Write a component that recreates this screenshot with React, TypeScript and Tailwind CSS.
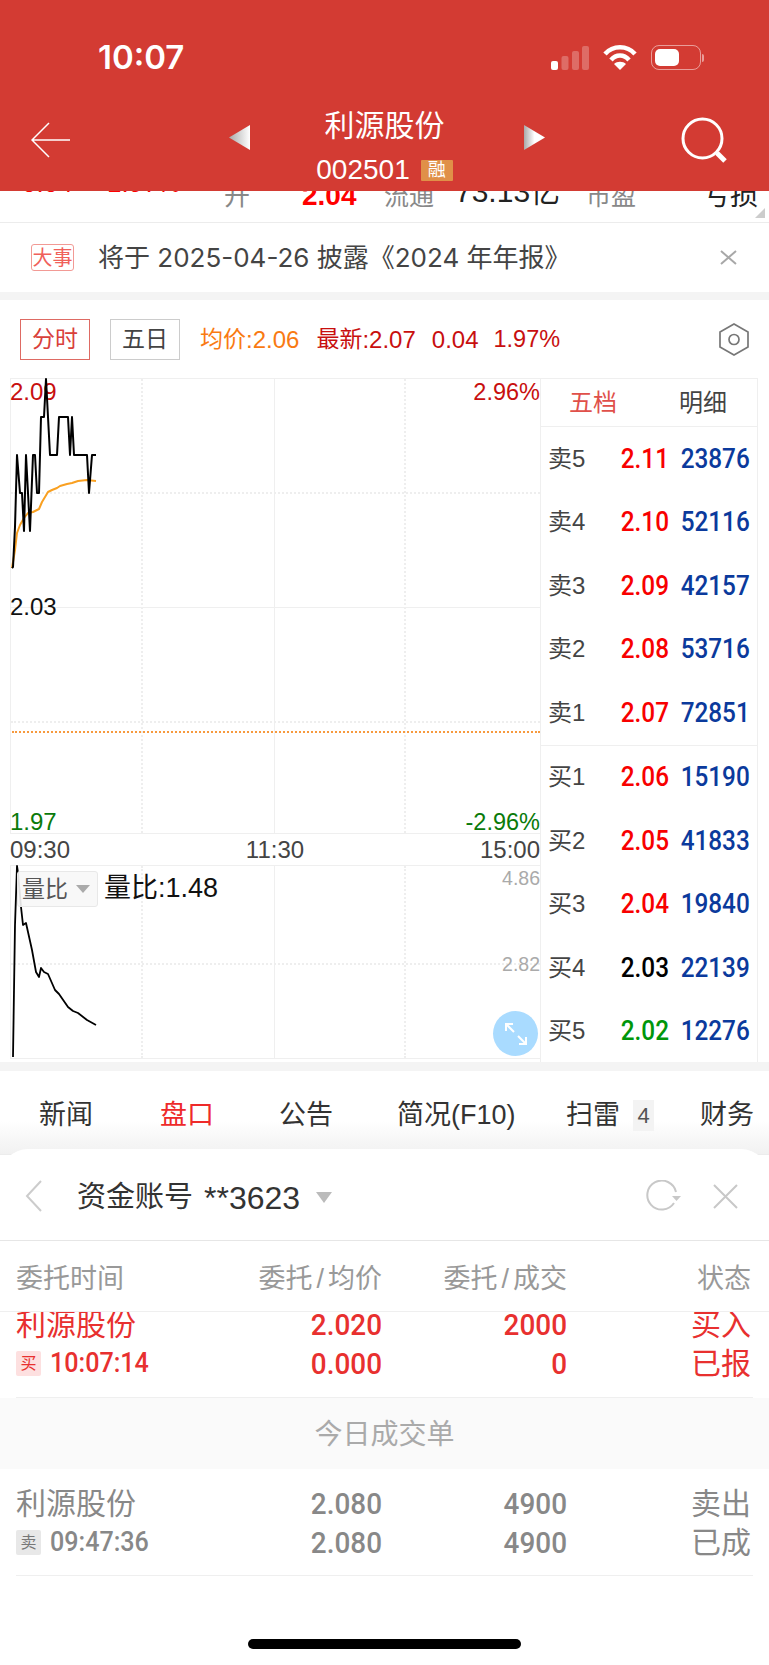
import React from 'react';

const cjk = '"Liberation Sans", "Noto Sans CJK SC", sans-serif';

const asks = [
  { label: '卖5', price: '2.11', vol: '23876', color: 'text-[#f80000]' },
  { label: '卖4', price: '2.10', vol: '52116', color: 'text-[#f80000]' },
  { label: '卖3', price: '2.09', vol: '42157', color: 'text-[#f80000]' },
  { label: '卖2', price: '2.08', vol: '53716', color: 'text-[#f80000]' },
  { label: '卖1', price: '2.07', vol: '72851', color: 'text-[#f80000]' },
];

const bids = [
  { label: '买1', price: '2.06', vol: '15190', color: 'text-[#f80000]' },
  { label: '买2', price: '2.05', vol: '41833', color: 'text-[#f80000]' },
  { label: '买3', price: '2.04', vol: '19840', color: 'text-[#f80000]' },
  { label: '买4', price: '2.03', vol: '22139', color: 'text-black' },
  { label: '买5', price: '2.02', vol: '12276', color: 'text-[#00960a]' },
];

const priceLine =
  '2,190 3,189 5,149 7,77 10,115 12,115 14,153 16,77 20,153 23,77 25,77 27,115 29,115 31,39 34,39 36,1 40,77 47,77 49,39 58,39 60,77 62,39 64,77 77,77 79,115 82,77 86,77';
const avgLine =
  '2,190 5,172 7,155 10,147 14,140 18,135 23,134 29,131 32,124 35,119 38,114 42,112 47,110 50,108 57,106 62,105 68,103 77,102 86,103';
const ratioLine =
  '3,192 5,60 7,1 8,8 11,42 13,60 16,58 22,85 26,107 29,112 31,103 34,107 38,109 45,125 49,129 58,142 63,146 68,148 77,155 86,160';

function OrderRow({ label, price, vol, color }: { label: string; price: string; vol: string; color: string }) {
  return (
    <div className="flex h-[63.5px] items-center pl-[7px] pr-[7px]">
      <span className="w-[61px] text-[24px] text-[#444]">{label}</span>
      <span className={`w-[60px] origin-right scale-x-90 text-right font-['Roboto'] text-[27px] font-medium ${color}`}>{price}</span>
      <span className="ml-auto origin-right scale-x-90 font-['Roboto'] text-[27px] font-medium text-[#0b3a9c]">{vol}</span>
    </div>
  );
}

function TradeRow({ tag, tagClass, textClass, time, a, b, c, d, e, f }: {
  tag: string; tagClass: string; textClass: string; time: string; a: string; b: string; c: string; d: string; e: string; f: string;
}) {
  return (
    <div className={`flex flex-col pl-[16px] pr-[18px] ${textClass}`}>
      <div className="flex h-[39px] items-center">
        <span className="w-[276px] text-[30px] leading-none">利源股份</span>
        <span className="w-[90px] origin-right scale-x-[.93] text-right font-['Roboto'] text-[30px] font-medium">{a}</span>
        <span className="w-[185px] origin-right scale-x-[.93] text-right font-['Roboto'] text-[30px] font-medium">{b}</span>
        <span className="ml-auto text-[30px] leading-none">{c}</span>
      </div>
      <div className="flex h-[39px] items-center">
        <span className="flex w-[276px] items-center gap-[9px]">
          <span className={`flex h-[25px] w-[25px] items-center justify-center rounded-[2px] text-[16px] ${tagClass}`}>{tag}</span>
          <span className="origin-left scale-x-[.93] font-['Roboto'] text-[27px] font-medium">{time}</span>
        </span>
        <span className="w-[90px] origin-right scale-x-[.93] text-right font-['Roboto'] text-[30px] font-medium">{d}</span>
        <span className="w-[185px] origin-right scale-x-[.93] text-right font-['Roboto'] text-[30px] font-medium">{e}</span>
        <span className="ml-auto text-[30px] leading-none">{f}</span>
      </div>
    </div>
  );
}

export default function App() {
  return (
    <div className="relative flex h-[1665px] w-[769px] flex-col overflow-hidden bg-white" style={{ fontFamily: cjk }}>
      {/* Header */}
      <header className="relative z-10 h-[191px] shrink-0 bg-[#d33b33] text-white">
        <div className="flex h-[116px] items-start justify-between pl-[98px] pr-[65px] pt-[39px]">
          <span className="font-['Inter'] text-[33px] font-semibold leading-[36px]">10:07</span>
          <div className="flex items-center gap-[14px] pt-[6px]">
            <svg width="38" height="24" viewBox="0 0 38 24" fill="#fff">
              <rect x="0" y="15" width="7" height="9" rx="2" />
              <rect x="10.5" y="10" width="7" height="14" rx="2" opacity="0.25" />
              <rect x="21" y="5" width="7" height="19" rx="2" opacity="0.25" />
              <rect x="31" y="0" width="7" height="24" rx="2" opacity="0.25" />
            </svg>
            <svg width="34" height="25" viewBox="0 0 34 25" fill="none" stroke="#fff" strokeWidth="4.5">
              <path d="M2 9 C10 0 24 0 32 9" />
              <path d="M8 15 C13 9 21 9 26 15" />
              <path d="M17 25 L11 19 C14 16 20 16 23 19 Z" fill="#fff" stroke="none" />
            </svg>
            <div className="flex items-center gap-[1px]">
              <div className="h-[25px] w-[50px] rounded-[8px] border-[1.5px] border-white/50 p-[3px]">
                <div className="h-full w-[24px] rounded-[5px] bg-white" />
              </div>
              <div className="h-[8px] w-[2px] rounded-r bg-white/50" />
            </div>
          </div>
        </div>
        <div className="relative h-[75px]">
          <svg className="absolute left-[31px] top-[14px]" width="40" height="36" viewBox="0 0 40 36" fill="none" stroke="#fff" strokeWidth="1.5">
            <path d="M18 1 L1 18 L18 35 M1 18 H39" />
          </svg>
          <svg className="absolute left-[228px] top-[17px]" width="23" height="25" viewBox="0 0 23 25">
            <defs>
              <linearGradient id="triL" x1="0" x2="1" y1="0" y2="0">
                <stop offset="0" stopColor="#a9a9a9" />
                <stop offset="1" stopColor="#fff" />
              </linearGradient>
            </defs>
            <path d="M1 12.5 L22 0 V25 Z" fill="url(#triL)" />
          </svg>
          <svg className="absolute left-[523px] top-[17px]" width="23" height="25" viewBox="0 0 23 25">
            <defs>
              <linearGradient id="triR" x1="0" x2="1" y1="0" y2="0">
                <stop offset="0" stopColor="#a9a9a9" />
                <stop offset="0.5" stopColor="#fff" />
              </linearGradient>
            </defs>
            <path d="M22 12.5 L1 0 V25 Z" fill="url(#triR)" />
          </svg>
          <div className="-mt-[8px] flex flex-col items-center">
            <span className="text-[30px] leading-[36px]">利源股份</span>
            <div className="mt-[15px] flex items-center gap-[11px]">
              <span className="text-[28px] leading-[22px]">002501</span>
              <span className="flex h-[21px] w-[32px] items-center justify-center rounded-[1px] bg-[#e09048] text-[18px] leading-none">融</span>
            </div>
          </div>
          <svg className="absolute left-[680px] top-[8px]" width="48" height="48" viewBox="0 0 48 48" fill="none" stroke="#fff">
            <circle cx="22.5" cy="22.5" r="19.5" strokeWidth="3" />
            <path d="M37 37 L45 45" strokeWidth="5" />
          </svg>
        </div>
      </header>

      {/* Quote row hidden under the header */}
      <div className="relative flex h-[32px] shrink-0 items-start overflow-hidden border-b-[1.5px] border-[#ececec]">
        <span className="absolute left-[22px] top-[-27px] text-[26px] font-medium text-[#f00]">0.04</span>
        <span className="absolute left-[107px] top-[-27px] text-[26px] font-medium text-[#f00]">1.97%</span>
        <span className="absolute left-[224px] top-[-14px] text-[26px] text-[#888]">开</span>
        <span className="absolute left-[302px] top-[-16px] text-[28px] font-bold text-[#f00]">2.04</span>
        <span className="absolute left-[384px] top-[-13px] text-[25px] text-[#888]">流通</span>
        <span className="absolute left-[455px] top-[-16px] text-[30px] leading-[34px] text-[#222]">73.13亿</span>
        <span className="absolute left-[586px] top-[-13px] text-[25px] text-[#888]">市盈</span>
        <span className="absolute left-[702px] top-[-16px] text-[28px] text-[#222]">亏损</span>
        <div className="absolute bottom-[4px] right-[4px] h-0 w-0 border-b-[10px] border-l-[10px] border-b-[#ccc] border-l-transparent" />
      </div>

      {/* Notice */}
      <div className="flex h-[69px] shrink-0 items-center pl-[31px] pr-[32px] text-[#444]">
        <span className="flex h-[27px] w-[43px] items-center justify-center rounded-[3px] border border-[#f29a95] text-[20px] leading-none text-[#f0605a]">大事</span>
        <span className="ml-[24px] font-['Inter','Noto_Sans_CJK_SC',sans-serif] text-[26px] leading-none">将于 2025-04-26 披露《2024 年年报》</span>
        <svg className="ml-auto" width="17" height="15" viewBox="0 0 17 15" fill="none" stroke="#a8a8a8" strokeWidth="2">
          <path d="M1 1 L16 14 M16 1 L1 14" />
        </svg>
      </div>
      <div className="h-[8px] shrink-0 bg-[#f4f4f4]" />

      {/* Chart toolbar */}
      <div className="flex h-[78px] shrink-0 items-start pl-[20px] pr-[20px] pt-[19px]">
        <span className="flex h-[41px] w-[70px] items-center justify-center border border-[#de6a63] text-[23px] text-[#d9403a]">分时</span>
        <span className="ml-[20px] flex h-[41px] w-[70px] items-center justify-center border border-[#ccc] text-[23px] text-[#444]">五日</span>
        <span className="ml-[20px] flex h-[41px] items-center text-[24px] text-[#f97a12]"><span className="text-[23px]">均价</span>:2.06</span>
        <span className="ml-[17px] flex h-[41px] items-center text-[24px] text-[#c80f0f]"><span className="text-[23px]">最新</span>:2.07</span>
        <span className="ml-[16px] flex h-[41px] items-center text-[24px] text-[#c80f0f]">0.04</span>
        <span className="ml-[15px] flex h-[41px] items-center text-[23.5px] text-[#c80f0f]">1.97%</span>
        <svg className="ml-auto mt-[4px]" width="30" height="33" viewBox="0 0 30 33" fill="none" stroke="#777" strokeWidth="1.7">
          <path d="M15 1 L29 9 V24 L15 32 L1 24 V9 Z" />
          <circle cx="15" cy="16.5" r="5" />
        </svg>
      </div>

      {/* Chart + order book */}
      <div className="flex h-[684px] shrink-0 pl-[10px]">
        <div className="flex w-[530px] flex-col">
          <div className="relative h-[456px] border-y border-l border-[#efefef]">
            <div className="absolute inset-0 grid grid-cols-[132px_132px_131px_1fr]">
              <div className="border-r-2 border-dotted border-[#eee]" />
              <div className="border-r border-[#efefef]" />
              <div className="border-r-2 border-dotted border-[#eee]" />
              <div />
            </div>
            <div className="absolute inset-0 grid grid-rows-[115px_114px_115px_1fr]">
              <div className="border-b-2 border-dotted border-[#eee]" />
              <div className="border-b border-[#efefef]" />
              <div className="border-b-2 border-dotted border-[#eee]" />
              <div />
            </div>
            <div className="absolute left-[1px] right-0 top-[352px] border-t-2 border-dotted border-[#f79a3e]" />
            <span className="absolute left-[-1px] top-[0px] text-[24px] leading-[26px] text-[#c80f0f]">2.09</span>
            <svg className="absolute left-[-1px] top-[-1px]" width="100" height="300" fill="none" strokeLinejoin="round">
              <polyline points={avgLine} stroke="#f9a021" strokeWidth="2" />
              <polyline points={priceLine} stroke="#000" strokeWidth="2" />
            </svg>
            <span className="absolute right-0 top-[0px] text-[23.5px] leading-[26px] text-[#c80f0f]">2.96%</span>
            <span className="absolute left-[-1px] top-[215px] text-[24px] leading-[26px] text-[#111]">2.03</span>
            <span className="absolute left-[-1px] bottom-[-2px] text-[24px] leading-[26px] text-[#0a7a0a]">1.97</span>
            <span className="absolute right-0 bottom-[-2px] text-[23.5px] leading-[26px] text-[#0a7a0a]">-2.96%</span>
          </div>
          <div className="flex h-[31px] items-center justify-between text-[24px] leading-none text-[#444]">
            <span>09:30</span>
            <span>11:30</span>
            <span>15:00</span>
          </div>
          <div className="relative h-[194px] border-y border-l border-[#efefef]">
            <div className="absolute inset-0 grid grid-cols-[132px_132px_131px_1fr]">
              <div className="border-r-2 border-dotted border-[#eee]" />
              <div className="border-r border-[#efefef]" />
              <div className="border-r-2 border-dotted border-[#eee]" />
              <div />
            </div>
            <div className="absolute inset-x-0 top-[97px] border-t-2 border-dotted border-[#eee]" />
            <svg className="absolute left-[-1px] top-[-1px]" width="100" height="194" fill="none" strokeLinejoin="round">
              <polyline points={ratioLine} stroke="#000" strokeWidth="1.8" />
            </svg>
            <div className="absolute left-[6px] top-[5px] flex h-[36px] w-[81px] items-center gap-[8px] rounded-[3px] border border-[#e8e8e8] bg-[#f7f7f7]/90 pl-[4px]">
              <span className="text-[23px] leading-none text-[#555]">量比</span>
              <span className="h-0 w-0 border-x-[7px] border-t-[8px] border-x-transparent border-t-[#aaa]" />
            </div>
            <span className="absolute left-[93px] top-[6px] text-[27px] leading-[32px] text-[#111]">量比:1.48</span>
            <span className="absolute right-0 top-[0px] text-[19.5px] leading-[24px] text-[#aaa]">4.86</span>
            <span className="absolute right-0 top-[86px] text-[19.5px] leading-[24px] text-[#aaa]">2.82</span>
            <div className="absolute bottom-[2px] right-[2px] flex h-[45px] w-[45px] items-center justify-center rounded-full bg-[#a9dbff]">
              <svg width="24" height="24" viewBox="0 0 24 24" fill="none" stroke="#fff" strokeWidth="2">
                <path d="M2 9 V2 H9 M2 2 L10 10 M22 15 V22 H15 M22 22 L14 14" />
              </svg>
            </div>
          </div>
        </div>
        <div className="w-[218px] border-x border-t border-[#efefef]">
          <div className="flex h-[48px] items-center border-b border-[#efefef] text-[24px]">
            <span className="w-[108px] pr-[4px] text-center text-[#e0504a]">五档</span>
            <span className="flex-1 text-center text-[#444]">明细</span>
          </div>
          <div className="border-b border-[#efefef]">
            {asks.map((row) => (
              <OrderRow key={row.label} {...row} />
            ))}
          </div>
          {bids.map((row) => (
            <OrderRow key={row.label} {...row} />
          ))}
        </div>
      </div>
      <div className="h-[9px] shrink-0 bg-[#f4f4f4]" />

      {/* Detail tabs, the sheet below overlaps their lower part */}
      <div className="relative h-[108px] shrink-0 text-[27px] text-[#333]">
        <div className="h-[84px] border-b border-[#ececec] bg-gradient-to-b from-white from-60% to-[#f1f1f1]">
          <div className="flex h-[64px] items-center pl-[39px] pt-[24px]">
            <span className="w-[121px]">新闻</span>
            <span className="w-[119px] text-[#ee2a2a]">盘口</span>
            <span className="w-[118px]">公告</span>
            <span className="w-[169px]">简况(F10)</span>
            <span className="w-[67px]">扫雷</span>
            <span className="flex h-[31px] w-[21px] items-center justify-center bg-[#f3f3f3] text-[22px] text-[#555]">4</span>
            <span className="ml-[46px]">财务</span>
          </div>
        </div>
      </div>

      {/* Bottom sheet */}
      <div className="relative z-10 -mt-[30px] flex flex-1 flex-col rounded-t-[28px] bg-white">
        <div className="relative flex h-[92px] shrink-0 items-center border-b border-[#e6e6e6] pt-[6px]">
          <svg className="absolute left-[24px] top-[31px]" width="20" height="32" viewBox="0 0 20 32" fill="none" stroke="#ccc" strokeWidth="2">
            <path d="M17 1 L3 16 L17 31" />
          </svg>
          <span className="ml-[77px] text-[29px] leading-none text-[#333]">资金账号</span>
          <span className="ml-[11px] text-[32px] leading-none text-[#333]">**3623</span>
          <span className="ml-[16px] h-0 w-0 border-x-[8px] border-t-[11px] border-x-transparent border-t-[#bbb]" />
          <svg className="absolute left-[646px] top-[31px]" width="36" height="32" viewBox="0 0 36 32" fill="none" stroke="#c8c8c8" strokeWidth="2">
            <path d="M30 12 A14.5 14.5 0 1 0 28 23" />
            <path d="M26 16 H35 L30.5 21 Z" fill="#c8c8c8" stroke="none" />
          </svg>
          <svg className="absolute left-[713px] top-[35px]" width="25" height="25" viewBox="0 0 25 25" fill="none" stroke="#c8c8c8" strokeWidth="2">
            <path d="M1 1 L24 24 M24 1 L1 24" />
          </svg>
        </div>
        <div className="flex h-[71px] shrink-0 items-center border-b border-[#efefef] pl-[16px] pr-[18px] pt-[6px] text-[27px] text-[#999]">
          <span className="w-[210px]">委托时间</span>
          <span className="w-[156px] text-right">委托<span className="mx-[4px]">/</span>均价</span>
          <span className="w-[185px] text-right">委托<span className="mx-[4px]">/</span>成交</span>
          <span className="ml-auto">状态</span>
        </div>
        <div className="h-[85px] shrink-0 overflow-hidden">
          <div className="-mt-[7px]">
            <TradeRow tag="买" tagClass="bg-[#fde0e0] text-[#e8302f]" textClass="text-[#e8302f]" time="10:07:14" a="2.020" b="2000" c="买入" d="0.000" e="0" f="已报" />
          </div>
        </div>
        <div className="mx-[16px] h-px shrink-0 bg-[#efefef]" />
        <div className="flex h-[71px] shrink-0 items-center justify-center bg-[#fafafa] pt-[2px] text-[28px] text-[#aaa]">今日成交单</div>
        <div className="flex h-[106px] shrink-0 flex-col justify-start pt-[15px]">
          <TradeRow tag="卖" tagClass="bg-[#e8e8e8] text-[#777]" textClass="text-[#888]" time="09:47:36" a="2.080" b="4900" c="卖出" d="2.080" e="4900" f="已成" />
        </div>
        <div className="mx-[16px] h-px shrink-0 bg-[#efefef]" />
        <div className="absolute bottom-[16px] left-[248px] h-[10px] w-[273px] rounded-full bg-black" />
      </div>
    </div>
  );
}
